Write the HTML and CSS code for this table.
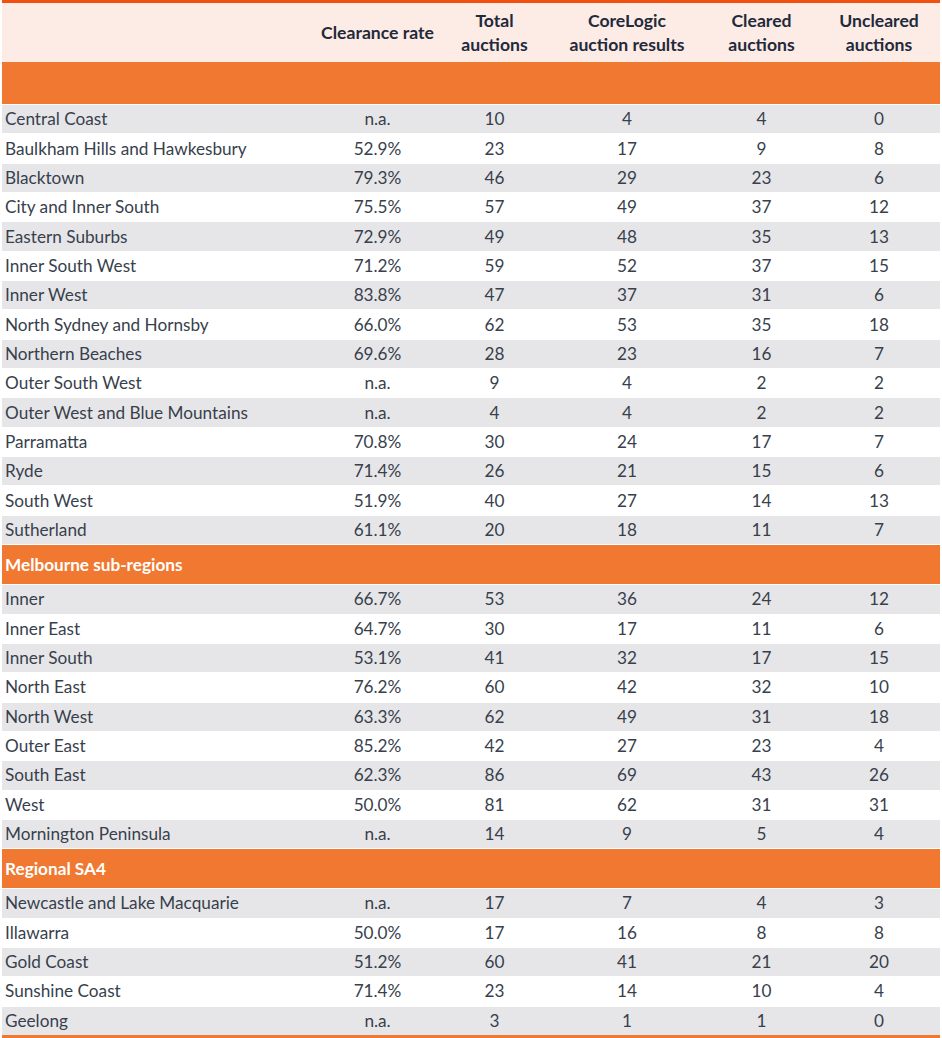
FILE: index.html
```html
<!DOCTYPE html>
<html>
<head>
<meta charset="utf-8">
<link rel="stylesheet" href="styles.css">
</head>
<body>
<table class="auctions">
  <colgroup>
    <col class="c-name"><col class="c-rate"><col class="c-total"><col class="c-core"><col class="c-clr"><col class="c-unc">
  </colgroup>
  <thead>
    <tr>
      <th></th>
      <th>Clearance rate</th>
      <th>Total<br>auctions</th>
      <th>CoreLogic<br>auction results</th>
      <th>Cleared<br>auctions</th>
      <th>Uncleared<br>auctions</th>
    </tr>
  </thead>
  <tbody>
    <tr class="section first"><td colspan="6"></td></tr>
    <tr class="odd"><td>Central Coast</td><td>n.a.</td><td>10</td><td>4</td><td>4</td><td>0</td></tr>
    <tr><td>Baulkham Hills and Hawkesbury</td><td>52.9%</td><td>23</td><td>17</td><td>9</td><td>8</td></tr>
    <tr class="odd"><td>Blacktown</td><td>79.3%</td><td>46</td><td>29</td><td>23</td><td>6</td></tr>
    <tr><td>City and Inner South</td><td>75.5%</td><td>57</td><td>49</td><td>37</td><td>12</td></tr>
    <tr class="odd"><td>Eastern Suburbs</td><td>72.9%</td><td>49</td><td>48</td><td>35</td><td>13</td></tr>
    <tr><td>Inner South West</td><td>71.2%</td><td>59</td><td>52</td><td>37</td><td>15</td></tr>
    <tr class="odd"><td>Inner West</td><td>83.8%</td><td>47</td><td>37</td><td>31</td><td>6</td></tr>
    <tr><td>North Sydney and Hornsby</td><td>66.0%</td><td>62</td><td>53</td><td>35</td><td>18</td></tr>
    <tr class="odd"><td>Northern Beaches</td><td>69.6%</td><td>28</td><td>23</td><td>16</td><td>7</td></tr>
    <tr><td>Outer South West</td><td>n.a.</td><td>9</td><td>4</td><td>2</td><td>2</td></tr>
    <tr class="odd"><td>Outer West and Blue Mountains</td><td>n.a.</td><td>4</td><td>4</td><td>2</td><td>2</td></tr>
    <tr><td>Parramatta</td><td>70.8%</td><td>30</td><td>24</td><td>17</td><td>7</td></tr>
    <tr class="odd"><td>Ryde</td><td>71.4%</td><td>26</td><td>21</td><td>15</td><td>6</td></tr>
    <tr><td>South West</td><td>51.9%</td><td>40</td><td>27</td><td>14</td><td>13</td></tr>
    <tr class="odd"><td>Sutherland</td><td>61.1%</td><td>20</td><td>18</td><td>11</td><td>7</td></tr>
    <tr class="section"><td colspan="6">Melbourne sub-regions</td></tr>
    <tr class="odd"><td>Inner</td><td>66.7%</td><td>53</td><td>36</td><td>24</td><td>12</td></tr>
    <tr><td>Inner East</td><td>64.7%</td><td>30</td><td>17</td><td>11</td><td>6</td></tr>
    <tr class="odd"><td>Inner South</td><td>53.1%</td><td>41</td><td>32</td><td>17</td><td>15</td></tr>
    <tr><td>North East</td><td>76.2%</td><td>60</td><td>42</td><td>32</td><td>10</td></tr>
    <tr class="odd"><td>North West</td><td>63.3%</td><td>62</td><td>49</td><td>31</td><td>18</td></tr>
    <tr><td>Outer East</td><td>85.2%</td><td>42</td><td>27</td><td>23</td><td>4</td></tr>
    <tr class="odd"><td>South East</td><td>62.3%</td><td>86</td><td>69</td><td>43</td><td>26</td></tr>
    <tr><td>West</td><td>50.0%</td><td>81</td><td>62</td><td>31</td><td>31</td></tr>
    <tr class="odd"><td>Mornington Peninsula</td><td>n.a.</td><td>14</td><td>9</td><td>5</td><td>4</td></tr>
    <tr class="section"><td colspan="6">Regional SA4</td></tr>
    <tr class="odd"><td>Newcastle and Lake Macquarie</td><td>n.a.</td><td>17</td><td>7</td><td>4</td><td>3</td></tr>
    <tr><td>Illawarra</td><td>50.0%</td><td>17</td><td>16</td><td>8</td><td>8</td></tr>
    <tr class="odd"><td>Gold Coast</td><td>51.2%</td><td>60</td><td>41</td><td>21</td><td>20</td></tr>
    <tr><td>Sunshine Coast</td><td>71.4%</td><td>23</td><td>14</td><td>10</td><td>4</td></tr>
    <tr class="odd last"><td>Geelong</td><td>n.a.</td><td>3</td><td>1</td><td>1</td><td>0</td></tr>
  </tbody>
</table>
</body>
</html>
```

FILE: styles.css
```css
html, body {
  margin: 0;
  padding: 0;
  background: #ffffff;
}

.auctions {
  margin-left: 2px;
  width: 938px;
  table-layout: fixed;
  border-collapse: separate;
  border-spacing: 0;
  font-family: "Lato", "Liberation Sans", sans-serif;
  font-size: 17.2px;
  color: #383f4d;
}

.c-name { width: 313px; }
.c-rate { width: 125px; }
.c-total { width: 109px; }
.c-core { width: 156px; }
.c-clr { width: 113px; }
.c-unc { width: 122px; }

.auctions thead th {
  background: #fdebe5;
  border-top: 3px solid #f2500f;
  height: 59px;
  padding: 0;
  font-size: 17.6px;
  font-weight: 700;
  color: #1f2a3b;
  line-height: 24px;
  text-align: center;
  vertical-align: middle;
}

.auctions td {
  height: 28.35px;
  padding: 0;
  border-top: 1px solid #ffffff;
  text-align: center;
  vertical-align: middle;
  line-height: 20px;
}

.auctions td:first-child {
  text-align: left;
  padding-left: 3px;
}

.auctions tr.odd td {
  background: #e6e6e8;
}

.auctions tr.section td {
  background: #f07830;
  color: #ffffff;
  font-weight: 700;
  height: 38px;
  padding-top: 1px;
}

.auctions tr.section.first td {
  height: 42px;
  padding-top: 0;
  border-top: 0;
}

.auctions tr.last td {
  border-bottom: 3px solid #f07830;
}
```
